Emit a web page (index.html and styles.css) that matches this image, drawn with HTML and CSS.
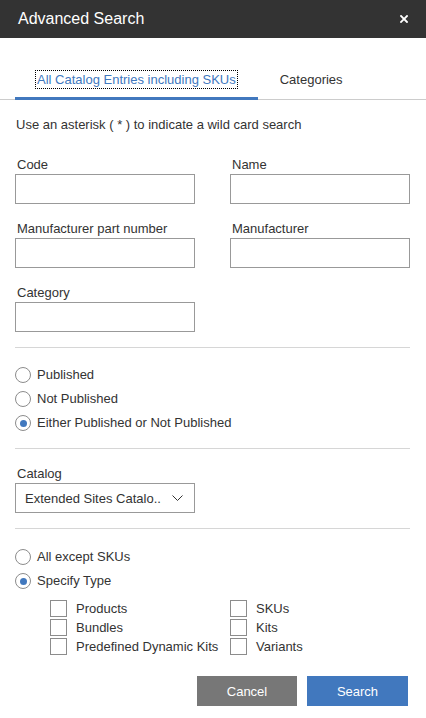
FILE: index.html
```html
<!DOCTYPE html>
<html lang="en">
<head>
  <meta charset="UTF-8">
  <meta name="viewport" content="width=device-width, initial-scale=1.0">
  <title>Advanced Search</title>
  <link rel="stylesheet" href="styles.css">
</head>
<body>
  <div class="dialog">
    <div class="dialog-header">
      <h2>Advanced Search</h2>
      <button class="close-btn" aria-label="Close">
        <svg width="8" height="8" viewBox="0 0 8 8">
          <path d="M1 1 L7 7 M7 1 L1 7" stroke="#fff" stroke-width="1.8" stroke-linecap="square"/>
        </svg>
      </button>
    </div>

    <div class="tabs">
      <div class="tab active"><span class="tab-label">All Catalog Entries including SKUs</span></div>
      <div class="tab"><span class="tab-label">Categories</span></div>
    </div>

    <div class="dialog-body">
      <p class="hint">Use an asterisk ( * ) to indicate a wild card search</p>

      <div class="field-grid">
        <div class="field">
          <label for="code">Code</label>
          <input type="text" id="code">
        </div>
        <div class="field">
          <label for="name">Name</label>
          <input type="text" id="name">
        </div>
        <div class="field">
          <label for="mpn">Manufacturer part number</label>
          <input type="text" id="mpn">
        </div>
        <div class="field">
          <label for="manufacturer">Manufacturer</label>
          <input type="text" id="manufacturer">
        </div>
        <div class="field">
          <label for="category">Category</label>
          <input type="text" id="category">
        </div>
      </div>

      <hr>

      <div class="radio-group">
        <label class="option"><input type="radio" name="published"> Published</label>
        <label class="option"><input type="radio" name="published"> Not Published</label>
        <label class="option"><input type="radio" name="published" checked> Either Published or Not Published</label>
      </div>

      <hr>

      <div class="field catalog-field">
        <label>Catalog</label>
        <div class="select">
          <span>Extended Sites Catalo..</span>
          <svg width="11" height="6" viewBox="0 0 11 6">
            <path d="M0.5 0.5 L5.5 5.5 L10.5 0.5" fill="none" stroke="#333" stroke-width="1"/>
          </svg>
        </div>
      </div>

      <hr>

      <div class="radio-group type-group">
        <label class="option"><input type="radio" name="type"> All except SKUs</label>
        <label class="option"><input type="radio" name="type" checked> Specify Type</label>
      </div>

      <div class="check-grid">
        <label class="option"><input type="checkbox"> Products</label>
        <label class="option"><input type="checkbox"> SKUs</label>
        <label class="option"><input type="checkbox"> Bundles</label>
        <label class="option"><input type="checkbox"> Kits</label>
        <label class="option"><input type="checkbox"> Predefined Dynamic Kits</label>
        <label class="option"><input type="checkbox"> Variants</label>
      </div>

      <div class="actions">
        <button class="btn btn-cancel">Cancel</button>
        <button class="btn btn-primary">Search</button>
      </div>
    </div>
  </div>
</body>
</html>
```

FILE: styles.css
```css
body {
  margin: 0;
  font-family: "Liberation Sans", Arial, sans-serif;
  font-size: 13px;
  color: #333;
  background-color: #fff;
}
.dialog {
  width: 426px;
}
.dialog-header {
  height: 38px;
  background-color: #333;
  display: flex;
  align-items: center;
  justify-content: space-between;
  padding: 0 16px 0 18px;
  box-sizing: border-box;
}
.dialog-header h2 {
  margin: 0;
  font-size: 16px;
  font-weight: normal;
  color: #fff;
}
.close-btn {
  background: none;
  border: none;
  padding: 0 2px;
  display: flex;
  cursor: pointer;
}
.tabs {
  display: flex;
  padding-left: 15px;
  border-bottom: 1px solid #ccc;
}
.tab {
  padding: 32px 22px 8px;
  line-height: 19px;
  border-bottom: 3px solid transparent;
  margin-bottom: -1px;
  text-align: center;
}
.tab.active {
  border-bottom-color: #4178be;
  color: #4178be;
}
.tab.active .tab-label {
  outline: 1px dotted #000;
  outline-offset: 1px;
}
.dialog-body {
  padding: 17px 16px 11px 15px;
}
.hint {
  margin: 0 0 24px 1px;
  line-height: 16px;
}
.field-grid {
  display: grid;
  grid-template-columns: 180px 180px;
  column-gap: 35px;
  row-gap: 17px;
  margin-bottom: 15px;
}
.field label {
  display: block;
  line-height: 16px;
  margin: 0 0 1px 2px;
}
.field input[type="text"] {
  display: block;
  width: 180px;
  height: 30px;
  box-sizing: border-box;
  border: 1px solid #999;
  margin: 0;
  font-family: inherit;
  font-size: 13px;
}
hr {
  border: none;
  border-top: 1px solid #d6d6d6;
  margin: 0;
}
.radio-group {
  display: flex;
  flex-direction: column;
  gap: 8px;
  padding: 19px 0 17px;
}
.type-group {
  padding: 20px 0 11px;
}
.option {
  display: flex;
  align-items: center;
  line-height: 16px;
  gap: 6px;
}
input[type="radio"] {
  appearance: none;
  margin: 0;
  width: 16px;
  height: 16px;
  border: 1px solid #8c8c8c;
  border-radius: 50%;
  box-sizing: border-box;
  display: grid;
  place-items: center;
}
input[type="radio"]:checked::after {
  content: "";
  width: 7px;
  height: 7px;
  border-radius: 50%;
  background-color: #4178be;
}
.catalog-field {
  padding: 17px 0 15px;
}
.field .select {
  width: 180px;
  height: 30px;
  box-sizing: border-box;
  border: 1px solid #999;
  display: flex;
  align-items: center;
  justify-content: space-between;
  padding: 0 11px 0 9px;
}
.check-grid {
  display: grid;
  grid-template-columns: 180px 180px;
  row-gap: 2px;
  margin-left: 35px;
}
.check-grid .option {
  gap: 9px;
  line-height: 17px;
}
input[type="checkbox"] {
  appearance: none;
  margin: 0;
  width: 17px;
  height: 17px;
  border: 1px solid #8c8c8c;
  box-sizing: border-box;
}
.actions {
  display: flex;
  justify-content: flex-end;
  gap: 10px;
  padding-right: 2px;
  margin-top: 21px;
}
.btn {
  height: 30px;
  border: none;
  color: #fff;
  font-family: inherit;
  font-size: 13px;
  cursor: pointer;
}
.btn-cancel {
  width: 100px;
  background-color: #777;
}
.btn-primary {
  width: 101px;
  background-color: #4178be;
}
```
